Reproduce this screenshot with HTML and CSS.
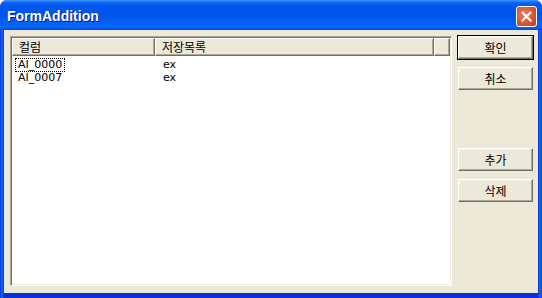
FILE: index.html
```html
<!DOCTYPE html>
<html>
<head>
<meta charset="utf-8">
<title>FormAddition</title>
<link rel="stylesheet" href="styles.css">
</head>
<body>
<div class="window">
  <div class="titlebar">
    <span class="title">FormAddition</span>
    <button class="close_btn" aria-label="닫기">
      <svg width="21" height="21" viewBox="0 0 21 21">
        <path d="M6 6 L15 15 M15 6 L6 15" stroke="#fff" stroke-width="2.2" stroke-linecap="square"/>
      </svg>
    </button>
  </div>
  <div class="client">
    <div class="listview">
      <div class="lv_header">
        <div class="col col_1">컬럼</div>
        <div class="col col_2">저장목록</div>
        <div class="col col_rest"></div>
      </div>
      <div class="lv_body">
        <div class="row">
          <div class="cell cell_1"><span class="focus">AI_0000</span></div>
          <div class="cell cell_2">ex</div>
        </div>
        <div class="row">
          <div class="cell cell_1"><span class="nofocus">AI_0007</span></div>
          <div class="cell cell_2">ex</div>
        </div>
      </div>
    </div>
    <div class="buttons">
      <button class="btn btn_default">확인</button>
      <button class="btn">취소</button>
      <div class="spacer"></div>
      <button class="btn">추가</button>
      <button class="btn">삭제</button>
    </div>
  </div>
</div>
</body>
</html>
```
FILE: styles.css
```css
html, body {
	margin: 0;
	padding: 0;
	background: #ffffff;
}
.window {
	width: 542px;
	height: 298px;
	box-sizing: border-box;
	display: flex;
	flex-direction: column;
	padding: 0 4px 5px 4px;
	border-radius: 7px 7px 0 0;
	background: linear-gradient(to right, #0831d9 0, #166aee 2px, #0831d9 4px, #0831d9 538px, #166aee 540px, #0b3ad8 542px);
}
.titlebar {
	height: 30px;
	margin: 0 -4px;
	padding: 0 5px 0 7px;
	display: flex;
	align-items: center;
	justify-content: space-between;
	border-radius: 7px 7px 0 0;
	background: linear-gradient(to bottom, #3d95ff 0, #0a5ff2 3px, #0058ee 6px, #0154ea 14px, #0463f5 24px, #0766ff 27px, #0046d8 30px);
}
.title {
	font-family: "Liberation Sans", sans-serif;
	font-weight: bold;
	font-size: 14px;
	color: #ffffff;
	text-shadow: 1px 1px 0 #0a1883;
	position: relative;
	top: 1px;
}
.close_btn {
	width: 21px;
	height: 21px;
	padding: 0;
	margin-top: 2px;
	border: 1px solid #ffffff;
	border-radius: 3px;
	background: radial-gradient(circle at 40% 40%, #e8836a 0, #d85a3c 50%, #c1391a 100%);
	display: flex;
	align-items: center;
	justify-content: center;
}
.close_btn svg {
	display: block;
}
.client {
	flex: 1;
	background: #ece9d8;
	display: flex;
	padding: 6px 5px 7px 6px;
	gap: 6px;
}
.listview {
	width: 442px;
	box-sizing: border-box;
	border-top: 1px solid #aca899;
	border-left: 1px solid #aca899;
	border-right: 1px solid #ffffff;
	border-bottom: 1px solid #ffffff;
	box-shadow: inset 1px 1px 0 #716f64, inset -1px -1px 0 #f1efe2;
	background: #ffffff;
	padding: 1px;
	display: flex;
	flex-direction: column;
	font-family: "DejaVu Sans", "Noto Sans CJK KR", sans-serif;
	font-size: 11px;
	color: #000000;
}
.lv_header {
	height: 18px;
	display: flex;
	background: #ece9d8;
	font-family: "Noto Sans CJK KR", sans-serif;
	font-size: 12px;
}
.col {
	box-sizing: border-box;
	height: 18px;
	line-height: 16px;
	padding-left: 6px;
	border-top: 1px solid #ffffff;
	border-left: 1px solid #ffffff;
	border-right: 1px solid #716f64;
	border-bottom: 1px solid #716f64;
	box-shadow: inset -1px -1px 0 #aca899;
}
.col_1 {
	width: 143px;
}
.col_2 {
	width: 279px;
}
.col_rest {
	flex: 1;
}
.lv_body {
	flex: 1;
	padding-top: 2px;
}
.row {
	display: flex;
	height: 13px;
	line-height: 13px;
}
.cell_1 {
	width: 143px;
	padding-left: 3px;
}
.cell_2 {
	padding-left: 5px;
}
.focus, .nofocus {
	display: inline-block;
	padding: 0 2px 0 2px;
	height: 12px;
	line-height: 12px;
	border: 1px dotted transparent;
}
.focus {
	border-color: #000000;
}
.buttons {
	display: flex;
	flex-direction: column;
	gap: 8px;
}
.spacer {
	height: 42px;
}
.btn {
	width: 75px;
	height: 23px;
	padding: 0;
	font-family: "Noto Sans CJK KR", sans-serif;
	font-size: 12px;
	color: #000000;
	background: #ece9d8;
	border-top: 1px solid #ffffff;
	border-left: 1px solid #ffffff;
	border-right: 1px solid #716f64;
	border-bottom: 1px solid #716f64;
	box-shadow: inset -1px -1px 0 #aca899, inset 1px 1px 0 #f1efe2;
}
.btn_default {
	outline: 1px solid #000000;
	outline-offset: 0;
}
```
